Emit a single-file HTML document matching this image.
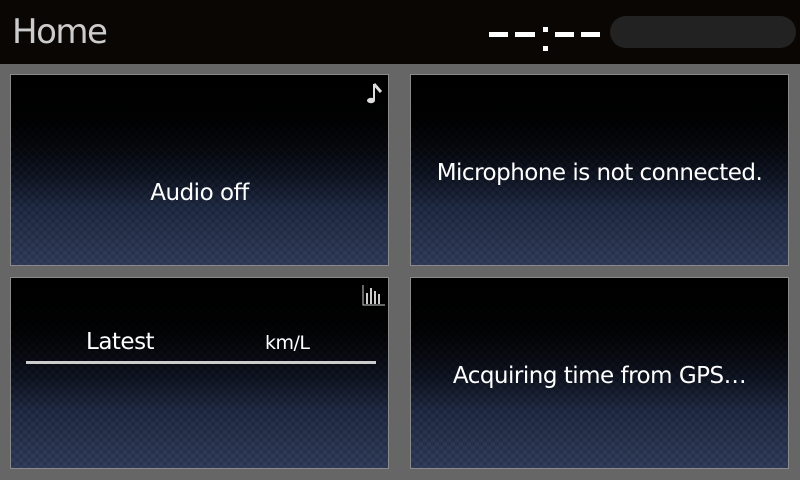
<!DOCTYPE html>
<html><head><style>
body{margin:0;width:800px;height:480px;background:#666;font-family:"DejaVu Sans","Liberation Sans",sans-serif;overflow:hidden;position:relative}
.hdr{position:absolute;left:0;top:0;width:800px;height:64px;background:#0a0604}
.title{position:absolute;left:12px;top:12px;font-size:34px;color:#ccc;letter-spacing:-1.5px}
.d{position:absolute;background:#fff}
.pill{position:absolute;left:610px;top:16px;width:186px;height:32px;border-radius:16px;background:#222}
.p{position:absolute;width:377px;height:190px;border:1px solid #8a8a8a;box-sizing:content-box;
background:
 repeating-conic-gradient(rgba(255,255,255,0.04) 0 25%,rgba(0,0,0,0) 0 50%) 0 0/8px 8px,
 linear-gradient(#000 0%,#05070c 20%,#10172a 50%,#1c2740 75%,#2a3652 100%);}
.p .m{position:absolute;inset:0;background:linear-gradient(#000 0%,rgba(0,0,0,0.85) 25%,rgba(0,0,0,0) 70%)}
.t{position:absolute;color:#fff;font-size:23px;white-space:nowrap;letter-spacing:-0.5px}
</style></head><body>
<div class="hdr"><div class="title">Home</div>
<div class="d" style="left:489px;top:32px;width:19px;height:5px"></div>
<div class="d" style="left:515px;top:32px;width:20px;height:5px"></div>
<div class="d" style="left:543px;top:27px;width:5px;height:5px"></div>
<div class="d" style="left:543px;top:46px;width:5px;height:5px"></div>
<div class="d" style="left:555px;top:32px;width:19px;height:5px"></div>
<div class="d" style="left:581px;top:32px;width:19px;height:5px"></div>
<div class="pill"></div></div>
<div class="p" style="left:10px;top:74px"><div class="m"></div>
 <div class="t" style="left:0;width:377px;text-align:center;top:105px">Audio off</div>
 <svg style="position:absolute;left:353px;top:6px" width="20" height="26"><path d="M10 3v16" stroke="#ddd" stroke-width="2"/><path d="M10 3l7 8" stroke="#ddd" stroke-width="3"/><ellipse cx="7" cy="19.5" rx="4" ry="2.7" fill="#ddd"/></svg>
</div>
<div class="p" style="left:410px;top:74px"><div class="m"></div>
 <div class="t" style="left:0;width:377px;text-align:center;top:85px">Microphone is not connected.</div>
</div>
<div class="p" style="left:10px;top:277px"><div class="m"></div>
 <div class="t" style="left:75px;top:51px">Latest</div>
 <div class="t" style="left:254px;top:54px;font-size:19px">km/L</div>
 <div style="position:absolute;left:15px;top:83px;width:350px;height:3px;background:#ccc"></div>
 <svg style="position:absolute;left:351px;top:5px" width="24" height="24"><path d="M1 2v20h22" stroke="#ccc" stroke-width="1" fill="none"/><rect x="4" y="10" width="2" height="11" fill="#ccc"/><rect x="8" y="5" width="2" height="16" fill="#ccc"/><rect x="12" y="8" width="2" height="13" fill="#ccc"/><rect x="16" y="11" width="2" height="10" fill="#ccc"/></svg>
</div>
<div class="p" style="left:410px;top:277px"><div class="m"></div>
 <div class="t" style="left:0;width:377px;text-align:center;top:85px">Acquiring time from GPS…</div>
</div>
</body></html>
